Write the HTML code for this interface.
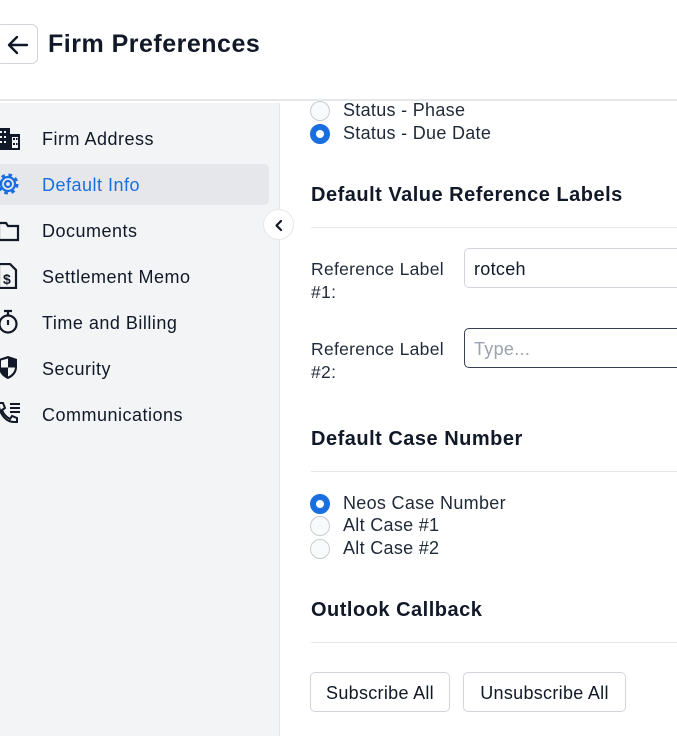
<!DOCTYPE html>
<html><head><meta charset="utf-8"><style>
*{box-sizing:border-box;margin:0;padding:0}
body{width:677px;height:736px;overflow:hidden;background:#fff;font-family:"Liberation Sans",sans-serif;color:#111827;position:relative}
.hdr{position:absolute;left:0;top:0;width:677px;height:101px;border-bottom:2px solid #e5e7eb;background:#fff}
.back{position:absolute;left:-4px;top:24px;width:42px;height:40px;border:1px solid #d1d5db;border-radius:6px;background:#fff}
.title{position:absolute;left:48px;top:30px;font-size:25px;font-weight:bold;color:#111827;letter-spacing:0.5px}
.side{position:absolute;left:0;top:103px;width:280px;height:633px;background:#f3f4f6;border-right:1px solid #e5e7eb}
.item{position:absolute;left:0;width:269px;height:41px;font-size:18px;line-height:43px;padding-left:42px;color:#111827;letter-spacing:0.5px}
.item.act{background:#e5e7eb;color:#1a6fe0;border-radius:0 5px 5px 0}
.item svg{position:absolute;left:-2px;top:10px}
.toggle{position:absolute;left:263px;top:209px;width:31px;height:31px;border-radius:50%;background:#fff;border:1px solid #e5e7eb}
.c{position:absolute;font-size:18px;color:#1f2937;letter-spacing:0.3px}
.radio{position:absolute;left:310px;width:20px;height:20px;border-radius:50%;border:1px solid #c9ccd1;background:#f9fafb}
.radio.on{background:#1a6fe0;border-color:#1a6fe0}
.radio.on:after{content:"";position:absolute;left:5px;top:5px;width:8px;height:8px;border-radius:50%;background:#fff}
.h{position:absolute;left:311px;font-size:20px;font-weight:bold;color:#111827;letter-spacing:0.5px}
.hr{position:absolute;left:311px;width:366px;height:1px;background:#e5e7eb}
.inp{position:absolute;left:464px;width:230px;height:40px;border:1px solid #d1d5db;border-radius:5px;font-size:18px;padding:8px 9px;line-height:24px;letter-spacing:0.3px}
.btn{position:absolute;top:672px;height:40px;border:1px solid #d1d5db;border-radius:5px;font-size:18px;line-height:40px;text-align:center;color:#111827;background:#fff;letter-spacing:0.3px}
</style></head><body>
<div class="hdr">
 <div class="back"><svg width="42" height="40" viewBox="0 0 42 40"><path d="M30 20H13M20 12l-8 8 8 8" stroke="#111827" stroke-width="2.4" fill="none" stroke-linecap="round" stroke-linejoin="round"/></svg></div>
 <div class="title">Firm Preferences</div>
</div>
<div class="side">
 <div class="item" style="top:15px"><svg width="24" height="22" viewBox="0 0 24 22"><path d="M0 0h12v22H0z M12 6h10v16H12z" fill="#111827"/><g fill="#f3f4f6"><rect x="2" y="3" width="2" height="2"/><rect x="6" y="3" width="2" height="2"/><rect x="2" y="8" width="2" height="2"/><rect x="6" y="8" width="2" height="2"/><rect x="2" y="13" width="2" height="2"/><rect x="6" y="13" width="2" height="2"/><rect x="14" y="9" width="6" height="11"/></g><g fill="#111827"><rect x="15" y="10" width="2" height="2"/><rect x="15" y="15" width="2" height="2"/><rect x="18" y="10" width="1.5" height="2"/><rect x="18" y="15" width="1.5" height="2"/></g></svg>Firm Address</div>
 <div class="item act" style="top:61px"><svg width="24" height="26" viewBox="0 0 24 26" style="top:7px"><circle cx="10" cy="13" r="9" stroke="#1a6fe0" stroke-width="3" fill="none" stroke-dasharray="3.5 3.6"/><circle cx="10" cy="13" r="7" stroke="#1a6fe0" stroke-width="2.2" fill="none"/><circle cx="10" cy="13" r="3" stroke="#1a6fe0" stroke-width="2.2" fill="none"/></svg>Default Info</div>
 <div class="item" style="top:107px"><svg width="24" height="22" viewBox="0 0 24 22" style="top:11px"><path d="M1 2h7l2 3h10v14H1z" stroke="#111827" stroke-width="2.2" fill="none"/></svg>Documents</div>
 <div class="item" style="top:153px"><svg width="22" height="26" viewBox="0 0 22 26" style="top:7px"><path d="M1 1h11l6 6v18H1z" stroke="#111827" stroke-width="2.2" fill="none"/><text x="5" y="21" font-size="14" font-weight="bold" font-family="Liberation Sans" fill="#111827">$</text></svg>Settlement Memo</div>
 <div class="item" style="top:199px"><svg width="22" height="26" viewBox="0 0 22 26" style="top:7px"><circle cx="10" cy="15" r="8.5" stroke="#111827" stroke-width="2.2" fill="none"/><path d="M6 2h8M10 2v4M10 11v5" stroke="#111827" stroke-width="2.2"/></svg>Time and Billing</div>
 <div class="item" style="top:245px"><svg width="22" height="26" viewBox="0 0 22 26" style="top:7px"><path d="M10 1l9 3v8c0 6-4 10-9 12C5 22 1 18 1 12V4z" fill="#111827"/><path d="M10 3.5v9H3V5.5zM10 12.5h7c-.5 4.5-3.5 7.5-7 9z" fill="#f3f4f6"/></svg>Security</div>
 <div class="item" style="top:291px"><svg width="24" height="26" viewBox="0 0 24 26" style="top:7px"><path d="M1 2h4l2 5-3 2c1.5 4 4 7 8 9l2-3 5 2v4h-3C9 21 3 15 1 6z" stroke="#111827" stroke-width="2" fill="none"/><path d="M12 3h10M12 7h10M12 11h10" stroke="#111827" stroke-width="2"/></svg>Communications</div>
</div>
<div class="toggle"><svg width="31" height="31" viewBox="0 0 31 31"><path d="M17 11l-4.5 4.5L17 20" stroke="#111827" stroke-width="2.2" fill="none" stroke-linecap="round" stroke-linejoin="round"/></svg></div>

<div class="radio" style="top:101px"></div><div class="c" style="left:343px;top:100px">Status - Phase</div>
<div class="radio on" style="top:124px"></div><div class="c" style="left:343px;top:123px">Status - Due Date</div>
<div class="h" style="top:184px">Default Value Reference Labels</div>
<div class="hr" style="top:227px"></div>
<div class="c" style="left:311px;top:258px;line-height:23px;font-size:17.5px">Reference Label<br>#1:</div>
<div class="inp" style="top:248px">rotceh</div>
<div class="c" style="left:311px;top:338px;line-height:23px;font-size:17.5px">Reference Label<br>#2:</div>
<div class="inp" style="top:328px;border-color:#374151;color:#9ca3af">Type...</div>
<div class="h" style="top:428px">Default Case Number</div>
<div class="hr" style="top:471px"></div>
<div class="radio on" style="top:494px"></div><div class="c" style="left:343px;top:493px">Neos Case Number</div>
<div class="radio" style="top:516px"></div><div class="c" style="left:343px;top:515px">Alt Case #1</div>
<div class="radio" style="top:539px"></div><div class="c" style="left:343px;top:538px">Alt Case #2</div>
<div class="h" style="top:599px">Outlook Callback</div>
<div class="hr" style="top:642px"></div>
<div class="btn" style="left:310px;width:140px">Subscribe All</div>
<div class="btn" style="left:463px;width:163px">Unsubscribe All</div>
</body></html>
